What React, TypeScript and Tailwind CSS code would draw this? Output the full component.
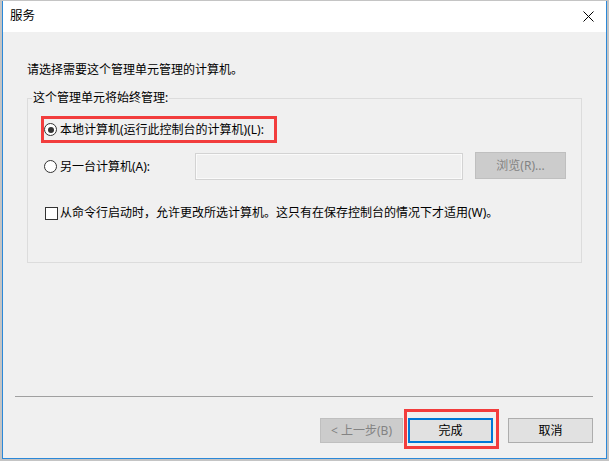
import React from 'react';

const font = "font-['Noto_Sans','Noto_Sans_CJK_SC',sans-serif]";

const Radio = ({ checked = false }: { checked?: boolean }) => (
  <span className="flex h-[13px] w-[13px] shrink-0 items-center justify-center rounded-full border border-[#333333] bg-white">
    {checked && <span className="h-[6px] w-[6px] rounded-full bg-[#333333]" />}
  </span>
);

const Checkbox = () => (
  <span className="block h-[13px] w-[13px] shrink-0 border border-[#333333] bg-white" />
);

export default function App() {
  return (
    <div className={`h-[461px] w-[609px] overflow-hidden bg-[#c4c4c4] pt-[1px] text-[12px] leading-[16px] text-black ${font}`}>
      {/* window */}
      <div className="ml-[2px] flex h-[458px] w-[605px] flex-col border-x border-b border-[#2b88d8] bg-[#f0f0f0]">
        {/* title bar */}
        <div className="flex h-[31px] shrink-0 items-center justify-between bg-white pl-[7px] pr-[10px]">
          <span className="pb-[1px] text-[12.5px]">服务</span>
          <svg width="11" height="11" viewBox="0 0 11 11" className="mr-[2px]">
            <path d="M0.5 0.5 L10.5 10.5 M10.5 0.5 L0.5 10.5" stroke="#000" strokeWidth="1" fill="none" />
          </svg>
        </div>

        {/* body */}
        <div className="flex flex-col pt-[30px]">
          <p className="pl-[24px]">请选择需要这个管理单元管理的计算机。</p>

          <fieldset className="ml-[24px] mt-[12px] w-[555px] border border-[#dcdcdc] pb-[41px]">
            <legend className="ml-[4px] px-[1px]">这个管理单元将始终管理:</legend>

            <div className="ml-[13px] mt-[10px] flex h-[27px] w-[236px] items-center gap-[3px] border-[3px] border-[#f23d3d]">
              <Radio checked />
              <span>本地计算机(运行此控制台的计算机)(L):</span>
            </div>

            <div className="mt-[10px] flex h-[27px] items-center">
              <div className="ml-[16px] flex w-[151px] items-center gap-[3px]">
                <Radio />
                <span>另一台计算机(A):</span>
              </div>
              <div className="h-[27px] w-[268px] border border-[#d3d3d3] bg-[#f0f0f0] shadow-[inset_0_0_0_1px_#fafafa]" />
              <div className="ml-[12px] flex h-[27px] w-[91px] -translate-y-px items-center justify-center border border-[#bfbfbf] bg-[#cccccc] text-[#838383]">
                浏览(R)...
              </div>
            </div>

            <div className="ml-[17px] mt-[25px] flex h-[16px] items-center gap-[2px]">
              <Checkbox />
              <span>从命令行启动时，允许更改所选计算机。这只有在保存控制台的情况下才适用(W)。</span>
            </div>
          </fieldset>

          <div className="ml-[12px] mt-[133px] h-px w-[578px] bg-[#a0a0a0]" />

          <div className="mt-[21px] flex h-[25px]">
            <div className="ml-[317px] flex h-[25px] w-[83px] items-center justify-center border border-[#bfbfbf] bg-[#cccccc] text-[#838383]">
              &lt; 上一步(B)
            </div>
            <div className="relative ml-[5px] h-[25px] w-[85px]">
              <div className="flex h-full w-full items-center justify-center border-2 border-[#0078d7] bg-[#e1e1e1]">
                完成
              </div>
              <div className="pointer-events-none absolute -bottom-[6px] -left-[4px] -right-[6px] -top-[9px] border-[3px] border-[#f23d3d]" />
            </div>
            <div className="ml-[15px] flex h-[25px] w-[85px] items-center justify-center border border-[#adadad] bg-[#e1e1e1]">
              取消
            </div>
          </div>
        </div>
      </div>
    </div>
  );
}
